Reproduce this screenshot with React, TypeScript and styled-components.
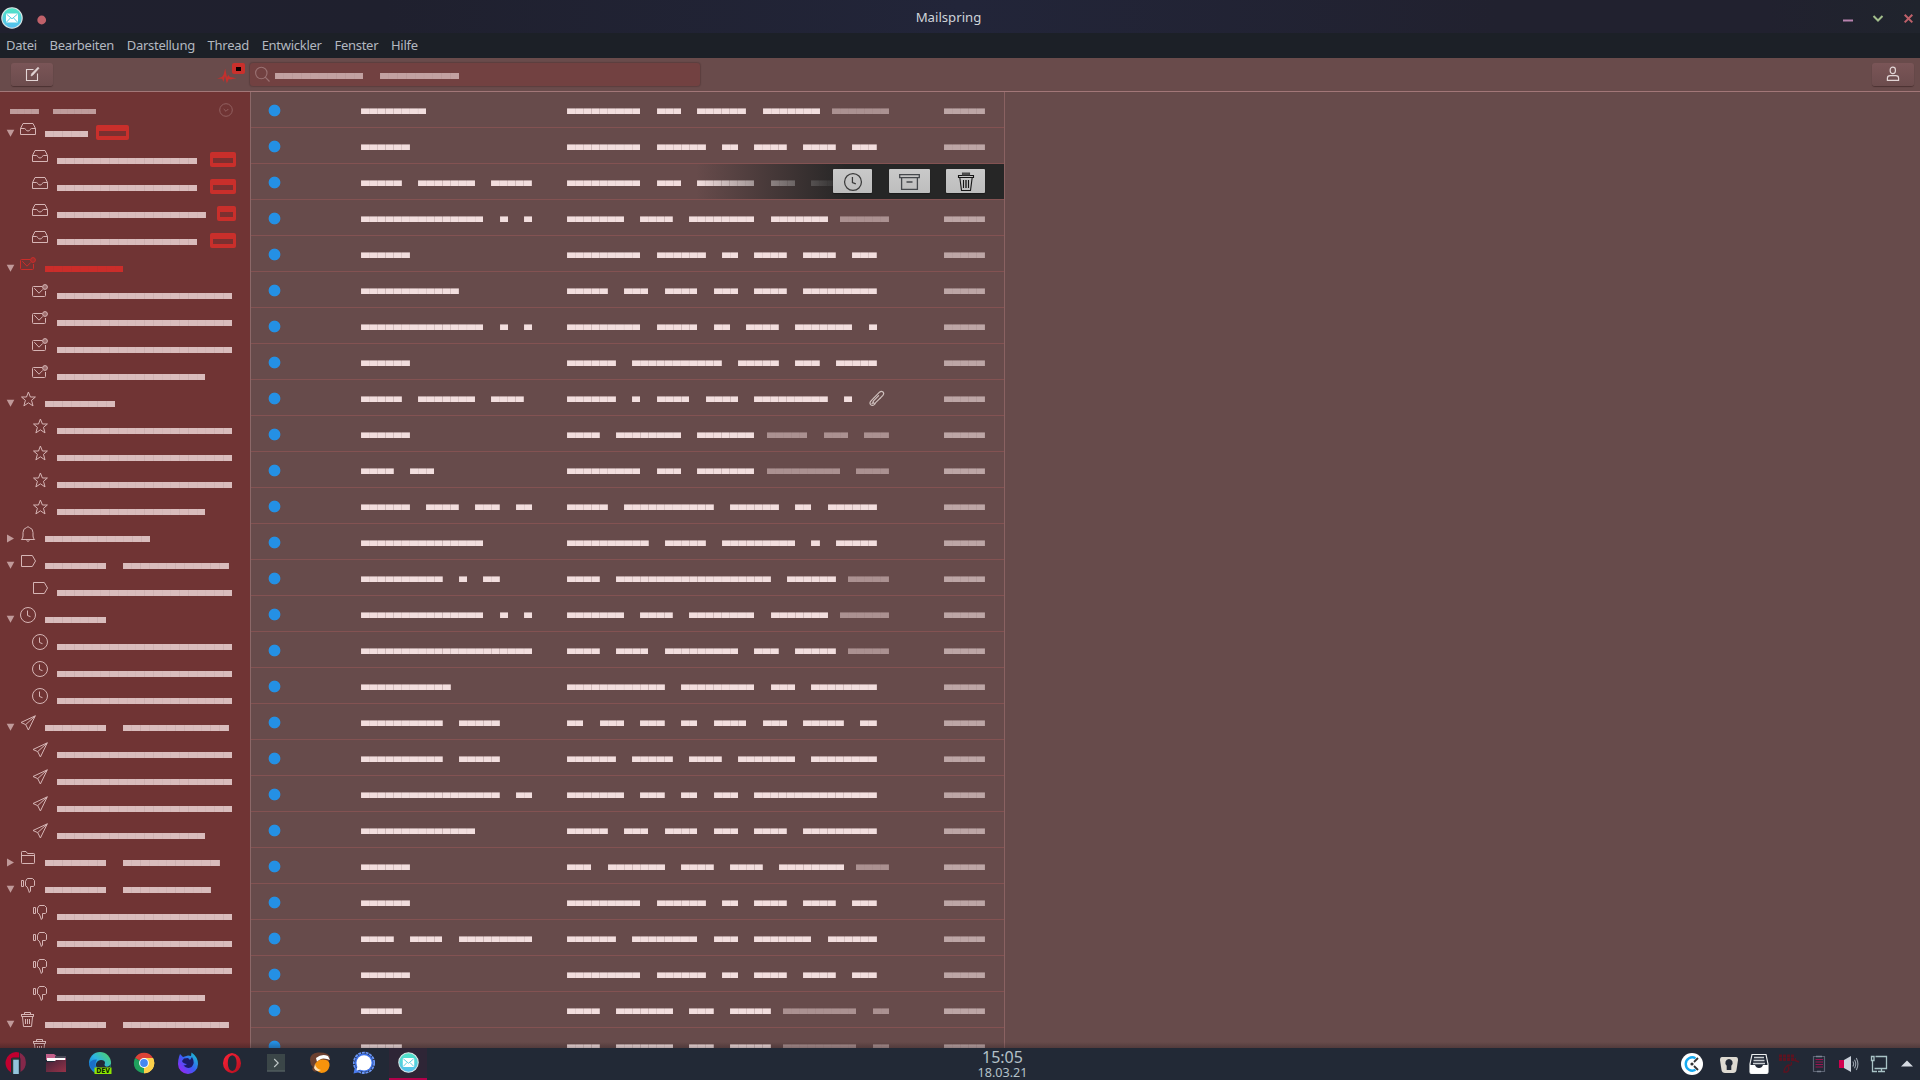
import React from 'react';
import styled, { createGlobalStyle, css } from 'styled-components';

const GlobalStyle = createGlobalStyle`
  html, body { margin: 0; padding: 0; background: #674b4b; }
  body { overflow: hidden; font-family: 'Noto Sans', 'Open Sans', sans-serif; }
  *, *::before, *::after { box-sizing: border-box; }
  svg { display: block; flex: none; }
`;

const LIST_CELL = 8.15;
const SIDE_CELL = 8.76;
const HEAD_CELL = 7.17;

const Window = styled.div`
  width: 1920px;
  height: 1080px;
  display: flex;
  flex-direction: column;
  background: #674b4b;
`;

/* ---------- title bar ---------- */

const TitleBar = styled.header`
  height: 33px;
  flex: none;
  display: grid;
  grid-template-columns: 1fr auto 1fr;
  align-items: start;
  background: linear-gradient(90deg, #20202e 0%, #1f202e 20%, #222539 50%, #21212f 78%, #21212f 92%, #20242d 100%);
`;

const TitleLeft = styled.div`
  display: flex;
  padding-left: 1px;
  gap: 13px;
`;

const TitleLogo = styled.span`
  margin-top: 7px;
`;

const Title = styled.div`
  font-size: 13.2px;
  line-height: 18px;
  padding-top: 8px;
  margin-right: 23px;
  color: #cfd4da;
`;

const TitleControls = styled.div`
  display: flex;
  justify-content: flex-end;
  gap: 14px;
  padding: 10px 4px 0 0;
`;

const MenuBar = styled.nav`
  height: 25px;
  flex: none;
  display: flex;
  gap: 12.7px;
  padding: 3px 0 0 6px;
  background: #1c2027;
  color: #b3b8c0;
  font-size: 13px;
  letter-spacing: -0.27px;
  line-height: 18px;
`;

/* ---------- toolbar ---------- */

const Toolbar = styled.div`
  height: 34px;
  flex: none;
  display: flex;
  align-items: flex-start;
  padding: 5px 6px 0 11px;
  background: #694b4b;
  border-bottom: 1px solid #a27778;
`;

const ToolButton = styled.button`
  width: 42px;
  height: 23px;
  padding: 0 0 1px;
  border: 0;
  border-radius: 3px;
  display: flex;
  align-items: center;
  justify-content: center;
  background: linear-gradient(#7a5557, #6c4c4d);
  box-shadow: 0 1px 1px rgba(30, 10, 10, 0.4);
  color: #e3d6d6;
`;

const Activity = styled.div`
  position: relative;
  width: 28px;
  height: 24px;
  margin-left: 164px;
`;

const ActivityBadge = styled.span`
  position: absolute;
  left: 15px;
  top: 0;
  width: 13px;
  height: 11px;
  border-radius: 2px;
  background: #c9302c;
  display: flex;
  align-items: center;
  justify-content: center;
  &::after { content: ''; width: 5px; height: 4px; background: #0b0000; margin-top: 1px; }
`;

const SearchField = styled.div`
  width: 450px;
  height: 23px;
  margin-left: 5px;
  border-radius: 3px;
  display: flex;
  align-items: flex-start;
  padding-left: 5px;
  background: #724141;
  box-shadow: 0 0 1px 1px rgba(60, 35, 35, 0.3);
`;

const SearchWords = styled.div`
  display: flex;
  gap: 17px;
  margin: 10px 0 0 5px;
`;

const Spacer = styled.div`
  flex: 1;
`;

/* ---------- blocked-out words ---------- */

interface WordProps { $w: number; $tone: string; $h?: number; $unit?: number; $seam?: number; $soft?: boolean }

const Word = styled.span<WordProps>`
  flex: none;
  width: ${p => p.$w}px;
  height: ${p => p.$h ?? 6}px;
  ${p => css`
    background:
      repeating-linear-gradient(90deg,
        rgba(90, 60, 60, ${p.$seam ?? 0.06}) 0,
        rgba(90, 60, 60, 0) 0.6px,
        rgba(90, 60, 60, 0) ${(p.$unit ?? LIST_CELL) - 0.6}px,
        rgba(90, 60, 60, ${p.$seam ?? 0.06}) ${p.$unit ?? LIST_CELL}px),
      ${p.$soft ? 'linear-gradient(rgba(102, 74, 74, 0.42) 1px, transparent 1px),' : ''}
      ${p.$tone};
  `}
`;

/* ---------- panes ---------- */

const Panes = styled.main`
  position: relative;
  height: 956px;
  flex: none;
  display: flex;
  overflow: hidden;
`;

const PaneShade = styled.div`
  position: absolute;
  left: 0;
  right: 0;
  bottom: 0;
  height: 6px;
  background: linear-gradient(transparent, rgba(25, 15, 20, 0.28));
`;

const Sidebar = styled.aside`
  width: 251px;
  flex: none;
  background: #703434;
  border-right: 1px solid #8c6868;
`;

const AccountHead = styled.div`
  height: 25px;
  display: flex;
  padding: 17px 17px 0 10px;
  gap: 14px;
`;

const AccountToggle = styled.span`
  margin: -6px 0 0 auto;
  color: #926060;
`;

const FolderRow = styled.div<{ $child: boolean; $active?: boolean }>`
  height: 27px;
  display: flex;
  align-items: flex-start;
  padding-left: ${p => (p.$child ? 32 : 6)}px;
  padding-right: 14px;
  color: ${p => (p.$active ? '#cb2d2a' : '#d6b5b5')};
`;

const Arrow = styled.span`
  width: 14px;
  padding: 12px 0 0 0;
  flex: none;
`;

const IconSlot = styled.span`
  width: 16px;
  margin: 4px 9px 0 0;
  flex: none;
`;

const FolderName = styled.span`
  display: flex;
  gap: 17px;
  margin-top: 14px;
`;

const Badge = styled.span<{ $w: number; $end: boolean }>`
  width: ${p => p.$w}px;
  height: 15px;
  margin: 8px 0 0 ${p => (p.$end ? 'auto' : '8px')};
  border-radius: 2px;
  background: #c92f2b;
  padding: 6px 3px 0;
  display: flex;
`;

const MessageList = styled.section`
  width: 754px;
  flex: none;
  background: #674b4b;
  border-right: 1px solid #8a6262;
`;

const Message = styled.article`
  position: relative;
  height: 36px;
  display: grid;
  grid-template-columns: 93px 206px 1fr 60px;
  padding-left: 17px;
  align-items: start;
  border-bottom: 1px solid #835252;
`;

const UnreadDot = styled.span`
  width: 13px;
  height: 13px;
  margin-top: 12px;
  background: radial-gradient(circle at 6.5px 6.5px, #2490e4 5.4px, rgba(36, 144, 228, 0) 6.3px);
`;

const Words = styled.div`
  display: flex;
  gap: ${LIST_CELL * 2}px;
  padding-top: 16px;
`;

const Subject = styled.div`
  display: flex;
  gap: 12.2px;
  height: 35px;
`;

const Clip = styled.span`
  padding-top: 10px;
  margin-left: 4px;
`;

const HoverActions = styled.div`
  position: absolute;
  right: 0;
  top: 0;
  height: 35px;
  width: 308px;
  display: flex;
  align-items: flex-start;
  justify-content: flex-end;
  padding: 5px 19px 0 0;
  background: linear-gradient(90deg, rgba(38, 38, 38, 0) 0, #262626 150px);
`;

const ActionButton = styled.button<{ $w: number; $gap: number }>`
  width: ${p => p.$w}px;
  height: 24px;
  margin: 0 0 0 ${p => p.$gap}px;
  padding: 1px 0 0;
  border: 0;
  display: flex;
  align-items: center;
  justify-content: center;
  border-radius: 1px;
  background: linear-gradient(#c9c9c9, #bdbdbd);
  box-shadow: 0 1px 1px #1b1b1b;
  color: #3a3a3a;
`;

/* ---------- taskbar ---------- */

const Taskbar = styled.footer`
  height: 32px;
  flex: none;
  display: grid;
  grid-template-columns: 1fr auto 1fr;
  background: #222936;
`;

const Launchers = styled.div`
  display: flex;
`;

const Launcher = styled.div<{ $first?: boolean; $active?: boolean }>`
  width: ${p => (p.$first ? 31 : 38)}px;
  margin-right: 6px;
  height: 32px;
  padding-top: ${p => (p.$active ? 4 : 3)}px;
  display: flex;
  justify-content: center;
  align-items: flex-start;
  ${p => p.$active && css`
    background: #2e2536;
    border-bottom: 2px solid #b3004b;
  `}
`;

const Clock = styled.div`
  display: flex;
  flex-direction: column;
  align-items: center;
  padding-left: 85px;
  color: #b4c1c8;
`;

const Time = styled.span`
  font-size: 16px;
  line-height: 17px;
  padding-top: 1px;
`;

const DateText = styled.span`
  font-size: 12.6px;
  line-height: 14px;
`;

const Tray = styled.div`
  display: flex;
  justify-content: flex-end;
  align-items: flex-start;
  padding-top: 4px;
`;

const TrayItem = styled.span<{ $w?: number }>`
  width: ${p => p.$w ?? 30}px;
  display: flex;
  justify-content: center;
`;

/* ---------- icons ---------- */

const glyphs: Record<string, React.ReactNode> = {
  inbox: <path d="M3 2.5H13L15.5 7.5V13.5H.5V7.5ZM.5 7.5H4.5Q5.5 7.6 5.7 8.6Q6.5 10 8 10T10.3 8.6Q10.5 7.6 11.5 7.5H15.5" />,
  unread: (
    <>
      <path d="M10 3.5H1.5Q.5 3.5.5 4.5V12.5Q.5 13.5 1.5 13.5H12.5Q13.5 13.5 13.5 12.5V8M2.3 5.2L7 10.2L10.8 6.4" />
      <circle cx="13" cy="4" r="2.4" fill="currentColor" fillOpacity=".45" />
    </>
  ),
  star: <path d="M8.4 1L10.4 6H15.4L11.5 9.3L13 14.9L8.4 11.8L3.9 14.9L5.4 9.3L1.5 6H6.5Z" />,
  bell: <path d="M1.3 13.5H14.7Q13 12.5 13 10V6.5Q13 2.6 9.5 1.6Q8 -.2 6.5 1.6Q3 2.6 3 6.5V10Q3 12.5 1.3 13.5ZM6.3 14Q8 17 9.7 14" />,
  tag: <path d="M1.5 2.5H12.3L15.5 8L12.3 13.5H1.5Z" />,
  clock: <><circle cx="8" cy="8" r="7.5" /><path d="M7.5 3.5V8.5L10.5 9.7" /></>,
  send: <path d="M15.3.8L1 7.5L5.7 9.6L8.4 15ZM15.3.8L5.7 9.6" />,
  folder: <path d="M1.5 2.2V12.7Q1.5 13.5 2.3 13.5H13.7Q14.5 13.5 14.5 12.7V4.3Q14.5 3.5 13.7 3.5H7.5L6 1.5H2.3Q1.5 1.5 1.5 2.2ZM1.5 5.5H14.5" />,
  spam: <path d="M1.5 3.5H3.5V9.5H1.5ZM5.5 4.2L7.3 1.5H12.5L14.5 3.5V8.5L13.3 9.5H10.5V14L9.3 15.5L8.5 13L7.2 10L5.5 8.8Z" />,
  trash: <path d="M1 2.5H14M1.5 2.5V4.5H13.5V2.5M4.5 2V.5H10.5V2M2.5 5L3.5 14.5H11.5L12.5 5M5.5 7V12M7.5 7V12M9.5 7V12" />,
};

const Glyph = ({ name, size = 16, weight = 1 }: { name: string; size?: number; weight?: number }) => (
  <svg width={size} height={size} viewBox="0 0 16 16" fill="none" stroke="currentColor" strokeWidth={weight} overflow="visible">
    {glyphs[name]}
  </svg>
);

const MailLogo = ({ size, id }: { size: number; id: string }) => (
  <svg width={size} height={size} viewBox="0 0 22 22">
    <defs>
      <linearGradient id={id} x1="0" y1="0" x2="0" y2="1">
        <stop offset="0" stopColor="#50e6c4" />
        <stop offset="1" stopColor="#55bdf2" />
      </linearGradient>
    </defs>
    <circle cx="11" cy="11" r="10.2" fill={`url(#${id})`} stroke="#d9e6e6" strokeWidth="1.1" />
    <rect x="5" y="6.4" width="12" height="9.2" rx="1" fill="#fff" />
    <path d="M5.6 7.2L11 11.8L16.4 7.2M5.6 15L9.4 11M16.4 15L12.6 11" fill="none" stroke="#55cfe0" strokeWidth="1" />
  </svg>
);

/* ---------- data ---------- */

interface Folder { icon: string; words: number[]; child?: boolean; closed?: boolean; active?: boolean; badge?: number }

const kids = (icon: string, lengths: number[]): Folder[] => lengths.map(n => ({ icon, words: [n], child: true }));

const folders: Folder[] = [
  { icon: 'inbox', words: [4.93], badge: 33 },
  { icon: 'inbox', words: [16], child: true, badge: 26 },
  { icon: 'inbox', words: [16], child: true, badge: 26 },
  { icon: 'inbox', words: [17], child: true, badge: 19 },
  { icon: 'inbox', words: [16], child: true, badge: 26 },
  { icon: 'unread', words: [8.93], active: true },
  ...kids('unread', [20, 20, 20, 16.9]),
  { icon: 'star', words: [8] },
  ...kids('star', [20, 20, 20, 16.9]),
  { icon: 'bell', words: [12], closed: true },
  { icon: 'tag', words: [7, 12.1] },
  ...kids('tag', [20]),
  { icon: 'clock', words: [7] },
  ...kids('clock', [20, 20, 20]),
  { icon: 'send', words: [7, 12.1] },
  ...kids('send', [20, 20, 20, 16.9]),
  { icon: 'folder', words: [7, 11], closed: true },
  { icon: 'spam', words: [7, 10.05] },
  ...kids('spam', [20, 20, 20, 16.9]),
  { icon: 'trash', words: [7, 12.1] },
  ...kids('trash', [20]),
];

interface Mail { from: number[]; subject: number[]; snippet?: number[]; clip?: boolean; hovered?: boolean }

const backup = [9, 6, 2, 4, 4, 3];

const mails: Mail[] = [
  { from: [8], subject: [9, 3, 6, 7], snippet: [7] },
  { from: [6], subject: backup },
  { from: [5, 7, 5], subject: [9, 3, 7, 3, 5], hovered: true },
  { from: [15, 1, 1], subject: [7, 4, 8, 7], snippet: [6] },
  { from: [6], subject: backup },
  { from: [12], subject: [5, 3, 4, 3, 4, 9] },
  { from: [15, 1, 1], subject: [9, 5, 2, 4, 7, 1] },
  { from: [6], subject: [6, 11, 5, 3, 5] },
  { from: [5, 7, 4], subject: [6, 1, 4, 4, 9, 1], clip: true },
  { from: [6], subject: [4, 8, 7], snippet: [5, 3, 3] },
  { from: [4, 3], subject: [9, 3, 7], snippet: [9, 4] },
  { from: [6, 4, 3, 2], subject: [5, 11, 6, 2, 6] },
  { from: [15], subject: [10, 5, 9, 1, 5] },
  { from: [10, 1, 2], subject: [4, 19, 6], snippet: [5] },
  { from: [15, 1, 1], subject: [7, 4, 8, 7], snippet: [6] },
  { from: [21], subject: [4, 4, 9, 3, 5], snippet: [5] },
  { from: [11], subject: [12, 9, 3, 8] },
  { from: [10, 5], subject: [2, 3, 3, 2, 4, 3, 5, 2] },
  { from: [10, 5], subject: [6, 5, 4, 7, 8] },
  { from: [17, 2], subject: [7, 3, 2, 3, 15] },
  { from: [14], subject: [5, 3, 4, 3, 4, 9] },
  { from: [6], subject: [3, 7, 4, 4, 8], snippet: [4] },
  { from: [6], subject: backup },
  { from: [4, 4, 9], subject: [6, 8, 3, 7, 6] },
  { from: [6], subject: backup },
  { from: [5], subject: [4, 7, 3, 5], snippet: [9, 2] },
  { from: [5], subject: [4, 7, 3, 5], snippet: [9, 2] },
];

const WordRun = ({ lengths, tone, seam = 0.24 }: { lengths: number[]; tone: string; seam?: number }) => (
  <Words>
    {lengths.map((n, i) => <Word key={i} $w={n * LIST_CELL} $tone={tone} $seam={seam} $soft />)}
  </Words>
);

const FolderItem = ({ f }: { f: Folder }) => (
  <FolderRow $child={!!f.child} $active={f.active}>
    {!f.child && (
      <Arrow>
        <svg width="9" height="9" viewBox="0 0 9 9">
          <path d={f.closed ? 'M1 0.5L8 4.5L1 8.5Z' : 'M.7 .7H8.3L4.5 7.8Z'} fill="#c09a9a" />
        </svg>
      </Arrow>
    )}
    <IconSlot><Glyph name={f.icon} /></IconSlot>
    <FolderName>
      {f.words.map((n, i) => (
        <Word key={i} $w={n * SIDE_CELL} $unit={SIDE_CELL} $seam={0.1} $tone={f.active ? '#cb2d2a' : '#d9bcbc'} />
      ))}
    </FolderName>
    {f.badge && (
      <Badge $w={f.badge} $end={!!f.child}>
        <Word $w={f.badge - 6} $h={5} $unit={7} $tone="#7b3030" />
      </Badge>
    )}
  </FolderRow>
);

const MailItem = ({ m }: { m: Mail }) => (
  <Message>
    <UnreadDot />
    <WordRun lengths={m.from} tone="#f2dede" />
    <Subject>
      <WordRun lengths={m.subject} tone="#f2dede" />
      {m.snippet && <WordRun lengths={m.snippet} tone="#ab9191" seam={0.08} />}
      {m.clip && (
        <Clip>
          <svg width="17" height="17" viewBox="0 0 17 17" fill="none" stroke="#cfc0bd" strokeWidth="1.2" strokeLinecap="round">
            <path d="M5.4 12.2L4 13.6M12 8.3L7.4 12.9Q6.2 13.9 5.3 12.9Q4.5 11.9 5.5 10.8L10.6 5.6" />
            <path d="M12 8.3L14.9 5.4Q16.4 3.5 15 2Q13.3.6 11.5 2.2L3 10.9Q1.2 12.9 2.6 14.6Q4.3 16.2 6.2 14.6L7.2 13.6" />
          </svg>
        </Clip>
      )}
    </Subject>
    <WordRun lengths={[5]} tone="#bda6a6" seam={0.12} />
    {m.hovered && (
      <HoverActions>
        <ActionButton $w={39} $gap={0}><Glyph name="clock" size={18} weight={1.1} /></ActionButton>
        <ActionButton $w={41} $gap={17}>
          <svg width="21" height="18" viewBox="0 0 21 18" fill="none" stroke="#45484c" strokeWidth="1.3">
            <path d="M.7 1.7H20.3V4.7H.7ZM2.6 4.7V16.4H18.4V4.7M7.5 9H13.5" />
          </svg>
        </ActionButton>
        <ActionButton $w={39} $gap={16}>
          <svg width="18" height="20" viewBox="0 0 18 20" fill="none" stroke="#151515" strokeWidth="1.1">
            <path d="M1.5 3.5H16.5V5.5H1.5Z" />
            <path d="M5.5 3V1H12.5V3Z" fill="#555" stroke="#444" />
            <path d="M2.8 5.5L4.5 18.5H13.5L15.2 5.5M6.5 8V16M11.5 8V16" />
            <path d="M9 8V16" strokeWidth="1.8" stroke="#444" />
          </svg>
        </ActionButton>
      </HoverActions>
    )}
  </Message>
);

const TitleRow = () => (
  <TitleBar>
    <TitleLeft>
      <TitleLogo><MailLogo size={22} id="logo-title" /></TitleLogo>
      <svg width="11" height="33" viewBox="0 0 11 33"><circle cx="5.7" cy="20" r="4.4" fill="#c0616a" /></svg>
    </TitleLeft>
    <Title>Mailspring</Title>
    <TitleControls>
      <svg width="16" height="16" viewBox="0 0 16 16"><path d="M3 10.5H13" stroke="#b883ae" strokeWidth="2" /></svg>
      <svg width="16" height="16" viewBox="0 0 16 16"><path d="M3.5 6L8 10.5L12.5 6" fill="none" stroke="#a3be8c" strokeWidth="2" /></svg>
      <svg width="16" height="16" viewBox="0 0 16 16"><path d="M4.7 4.8L12.3 12.4M12.3 4.8L4.7 12.4" fill="none" stroke="#bf616a" strokeWidth="2" /></svg>
    </TitleControls>
  </TitleBar>
);

const menus = ['Datei', 'Bearbeiten', 'Darstellung', 'Thread', 'Entwickler', 'Fenster', 'Hilfe'];

const MainToolbar = () => (
  <Toolbar>
    <ToolButton>
      <svg width="16" height="16" viewBox="0 0 16 16" fill="none" stroke="currentColor" strokeWidth="1.1">
        <path d="M9.5 3.5H2.5V14.5H13.5V7.5" />
        <path d="M7 10L7.6 7.8L14 1.2L15 2.2L8.8 9.2Z" fill="currentColor" strokeWidth=".6" />
      </svg>
    </ToolButton>
    <Activity>
      <svg width="20" height="24" viewBox="0 0 20 24">
        <path d="M0 15.5L5 14L6.6 11.5L8.2 5.5L10 14.5L11.2 12L13 14L19.5 15.2L13.5 16.4L11.8 16L9.8 20.5L8 13L6.4 19L5.2 15.8Z" fill="#c4302d" />
      </svg>
      <ActivityBadge />
    </Activity>
    <SearchField>
      <svg width="15" height="21" viewBox="0 0 15 21" fill="none" stroke="#9a7273" strokeWidth="1.1">
        <circle cx="6.3" cy="10" r="5.7" />
        <path d="M10.2 14.2L14.5 18.5" />
      </svg>
      <SearchWords>
        <Word $w={88} $unit={8.8} $seam={0.08} $tone="#c2a1a1" />
        <Word $w={79} $unit={8.8} $seam={0.08} $tone="#c2a1a1" />
      </SearchWords>
    </SearchField>
    <Spacer />
    <ToolButton>
      <svg width="14" height="16" viewBox="0 0 14 16" fill="none" stroke="currentColor" strokeWidth="1.2">
        <rect x="4.2" y="1.2" width="5.2" height="6.4" rx="2.5" />
        <path d="M1.4 14.4V12.2Q1.4 9.6 4.2 9.6H9.8Q12.6 9.6 12.6 12.2V14.4Z" />
      </svg>
    </ToolButton>
  </Toolbar>
);

const launcherIcons: React.ReactNode[] = [
  <svg key="start" width="22" height="24" viewBox="0 0 22 24">
    <path d="M11 1A11 11 0 0 0 6 21.5V8Q6 6.5 8 6.5H14V1.4Z" fill="#c0002f" />
    <path d="M14.8 1.7A11 11 0 0 1 15.5 21V8L14.8 6Z" fill="#85284a" />
    <path d="M7 7.2H14V8.7H8.2V22H7Z" fill="#2a3a33" />
    <rect x="8.2" y="8.7" width="5.6" height="14.3" fill="#93c5dc" />
  </svg>,
  <svg key="files" width="20" height="24" viewBox="0 0 20 24">
    <defs><linearGradient id="fm" x1="0" y1="0" x2="1" y2="1"><stop offset="0" stopColor="#43243a" /><stop offset="1" stopColor="#963248" /></linearGradient></defs>
    <path d="M0 3H8L10.5 5H20V9H0Z" fill="#c2608a" />
    <path d="M9 5H20V7H9Z" fill="#4a4a58" />
    <path d="M1 7H19V10H1Z" fill="#fff" />
    <path d="M0 11H8L10 9H20V21H0Z" fill="url(#fm)" />
  </svg>,
  <svg key="edge" width="24" height="24" viewBox="0 0 24 24">
    <defs><linearGradient id="eg" x1="0" y1="1" x2="1" y2="0"><stop offset="0" stopColor="#0a63c9" /><stop offset=".5" stopColor="#2bb2e6" /><stop offset="1" stopColor="#55d957" /></linearGradient></defs>
    <circle cx="12" cy="12" r="11" fill="url(#eg)" />
    <path d="M8 15A5 5 0 0 1 13 9Q17 9 17 12Q16 14 17 15Q20 17 23 13L21 18H10Z" fill="#222936" />
    <path d="M1 13Q3 8 9 8.5Q6 13 9 18H4Z" fill="#1b6fc8" />
    <rect x="6.5" y="16.5" width="17" height="6.5" fill="#8fe600" />
    <text x="15" y="22.2" textAnchor="middle" fontFamily="Noto Sans" fontWeight="800" fontSize="7" fill="#0c2406">DEV</text>
  </svg>,
  <svg key="chrome" width="22" height="24" viewBox="0 0 22 24">
    <path d="M11 12L2.1 7A10.2 10.2 0 0 1 20 7Z" fill="#dc4337" />
    <path d="M11 12L20 7A10.2 10.2 0 0 1 11 22.2Z" fill="#fcd04b" />
    <path d="M11 12V22.2A10.2 10.2 0 0 1 2.1 7Z" fill="#1fa15d" />
    <path d="M11 7H20A10.2 10.2 0 0 1 11 22.2L15 14Z" fill="#fcd04b" />
    <circle cx="11" cy="12" r="4.9" fill="#fff" />
    <circle cx="11" cy="12" r="3.9" fill="#4587f3" />
  </svg>,
  <svg key="firefox" width="22" height="24" viewBox="0 0 22 24">
    <defs><linearGradient id="ff" x1="0" y1="1" x2="1" y2="0"><stop offset="0" stopColor="#b018f5" /><stop offset=".5" stopColor="#3a5cf5" /><stop offset="1" stopColor="#12d6c8" /></linearGradient></defs>
    <path d="M2 6L3 3L6 6L11 4.5L14 5L14.5 1.5Q21 6 21 13A10 10 0 0 1 1 13Q1 9 2 6Z" fill="url(#ff)" />
    <path d="M5 10L7 7.5L11 7L13 9L15 6Q18.5 12 14.5 16Q10 18.5 6.5 14.5Q8.5 14.5 10 13Q6 12.5 5 10Z" fill="#1c1b66" />
  </svg>,
  <svg key="opera" width="22" height="24" viewBox="0 0 22 24">
    <defs><linearGradient id="op" x1="0" y1="0" x2="1" y2="1"><stop offset="0" stopColor="#ff2438" /><stop offset="1" stopColor="#b30d1d" /></linearGradient></defs>
    <path fillRule="evenodd" d="M11 2A10 10.2 0 0 1 11 22.3A10 10.2 0 0 1 11 2ZM11.3 4.2Q6.8 5 6.8 12T11.3 20Q15.6 19 15.6 12T11.3 4.2Z" fill="url(#op)" />
  </svg>,
  <svg key="term" width="18" height="24" viewBox="0 0 18 24">
    <rect y="3" width="18" height="17.5" fill="#3b4648" />
    <path d="M0 20H18" stroke="#5b6668" />
    <path d="M7.2 8L11.2 12L7.2 16" fill="none" stroke="#c2c9c9" strokeWidth="1.1" />
  </svg>,
  <svg key="lutris" width="22" height="24" viewBox="0 0 22 24">
    <path d="M1 9Q1 2 9 1.5Q19 1 21 6L20 10L8 20Q5 22 3 18Q5 16 2 14Z" fill="#6b4030" />
    <path d="M7 7Q13 2 19 5L21 9L18 8Q12 6 8 11Z" fill="#fff" />
    <path d="M6 13Q10 7 17 9Q21 10 20.5 15Q19 22 12.5 22Q6 21 6 13Z" fill="#f7930c" />
    <path d="M6 13Q7 18 12 19Q7 22 5 17Z" fill="#ffe0b0" />
  </svg>,
  <svg key="signal" width="22" height="24" viewBox="0 0 22 24">
    <circle cx="11" cy="11.8" r="10.2" fill="none" stroke="#6b96f5" strokeWidth="1.8" strokeDasharray="3 .8" />
    <path d="M.5 22.5L2 16L7 21Z" fill="#4a7cf0" />
    <circle cx="11" cy="11.8" r="9.2" fill="#3a6fe8" />
    <circle cx="11" cy="11.8" r="7.6" fill="#fff" />
    <path d="M3.5 19.5L4.5 15L8 18.5Z" fill="#fff" />
  </svg>,
];

const Panel = () => (
  <Taskbar>
    <Launchers>
      {launcherIcons.map((icon, i) => <Launcher key={i} $first={i === 0}>{icon}</Launcher>)}
      <Launcher $active><MailLogo size={21} id="logo-task" /></Launcher>
    </Launchers>
    <Clock>
      <Time>15:05</Time>
      <DateText>18.03.21</DateText>
    </Clock>
    <Tray>
      <TrayItem $w={44}>
        <svg width="24" height="24" viewBox="0 0 24 24" fill="none">
          <circle cx="12" cy="12" r="11" fill="#fff" />
          <path d="M15.5 6.2A6.6 6.6 0 1 0 15.5 17.8" stroke="#16aaf0" strokeWidth="2.4" />
          <circle cx="12" cy="12" r="1.6" fill="#333" />
          <path d="M14 10L18 6M14 14L18 18" stroke="#333" strokeWidth="1.8" />
        </svg>
      </TrayItem>
      <TrayItem>
        <svg width="20" height="24" viewBox="0 0 20 24">
          <path d="M3 5H17Q19 5 19 8L17.5 18Q17 21 14 21H6Q3 21 2.5 18L1 8Q1 5 3 5Z" fill="#dedad2" />
          <path d="M10 7A3.8 3.8 0 0 1 12.3 13.7V18H7.7V13.7A3.8 3.8 0 0 1 10 7Z" fill="#222936" />
        </svg>
      </TrayItem>
      <TrayItem>
        <svg width="20" height="24" viewBox="0 0 20 24">
          <path d="M3 2.5H17L19 12V20Q19 21.5 17.5 21.5H2.5Q1 21.5 1 20V12Z" fill="#222936" stroke="#eceeef" strokeWidth="1.2" />
          <path d="M5 5.5H15M4.5 8.5H15.5M4 11.5H16" stroke="#c9ced2" strokeWidth="1.5" />
          <path d="M1 13H6Q7 16 10 16T14 13H19V20Q19 21.5 17.5 21.5H2.5Q1 21.5 1 20Z" fill="#fff" />
        </svg>
      </TrayItem>
      <TrayItem>
        <svg width="22" height="24" viewBox="0 0 22 24" fill="none" stroke="#5c1320">
          <path d="M1 4H17M1 7.5H18" strokeWidth="3" strokeDasharray="3 1" />
          <path d="M16 8L21 10M13 10Q15 14 10 13Q6 16 6 20L9 20Q12 18 10 14" strokeWidth="1.4" />
        </svg>
      </TrayItem>
      <TrayItem>
        <svg width="14" height="24" viewBox="0 0 14 24" fill="none">
          <path d="M1.5 4.5H12.5V19.5H1.5Z" stroke="#5b6272" strokeWidth="1.2" />
          <path d="M3.5 7.5H11M3.5 10H11M3.5 12.5H11M3.5 15H11" stroke="#9a1450" strokeWidth="1.1" />
          <path d="M4 4.5H10M5 19.5H9" stroke="#7d8593" strokeWidth="1.6" />
        </svg>
      </TrayItem>
      <TrayItem>
        <svg width="20" height="24" viewBox="0 0 20 24" fill="none">
          <path d="M0 8H5V16H0Z" fill="#d1004f" />
          <path d="M5 8L12 4V20L5 16Z" fill="#ccd3dc" />
          <path d="M13.8 9.5Q15.5 12 13.8 14.5M15.5 7.7Q18 12 15.5 16.3M17.3 6Q20.5 12 17.3 18" stroke="#9aa3ae" strokeWidth="1.1" />
        </svg>
      </TrayItem>
      <TrayItem>
        <svg width="20" height="24" viewBox="0 0 20 24" fill="none" stroke="#a9c3c6" strokeWidth="1.3">
          <path d="M6.5 4.5H17.5V16.5H5.5M9 19.5H16M12.5 16.5V19.5M2.5 4.5H5V8.5H2.5ZM3.5 8.5V19.5H8" />
        </svg>
      </TrayItem>
      <TrayItem $w={26}>
        <svg width="14" height="24" viewBox="0 0 14 24"><path d="M1 14.5L7 8.5L13 14.5Z" fill="#d5dae2" /></svg>
      </TrayItem>
    </Tray>
  </Taskbar>
);

export default function App() {
  return (
    <Window>
      <GlobalStyle />
      <TitleRow />
      <MenuBar>{menus.map(m => <span key={m}>{m}</span>)}</MenuBar>
      <MainToolbar />
      <Panes>
        <Sidebar>
          <AccountHead>
            <Word $w={29} $h={5} $unit={HEAD_CELL} $tone="#bf9c9c" />
            <Word $w={43} $h={5} $unit={HEAD_CELL} $tone="#bf9c9c" />
            <AccountToggle>
              <svg width="14" height="14" viewBox="0 0 14 14" fill="none" stroke="currentColor">
                <circle cx="7" cy="7" r="6.3" />
                <path d="M4.7 6L7 8.3L9.3 6" />
              </svg>
            </AccountToggle>
          </AccountHead>
          {folders.map((f, i) => <FolderItem key={i} f={f} />)}
        </Sidebar>
        <MessageList>
          {mails.map((m, i) => <MailItem key={i} m={m} />)}
        </MessageList>
        <PaneShade />
      </Panes>
      <Panel />
    </Window>
  );
}
